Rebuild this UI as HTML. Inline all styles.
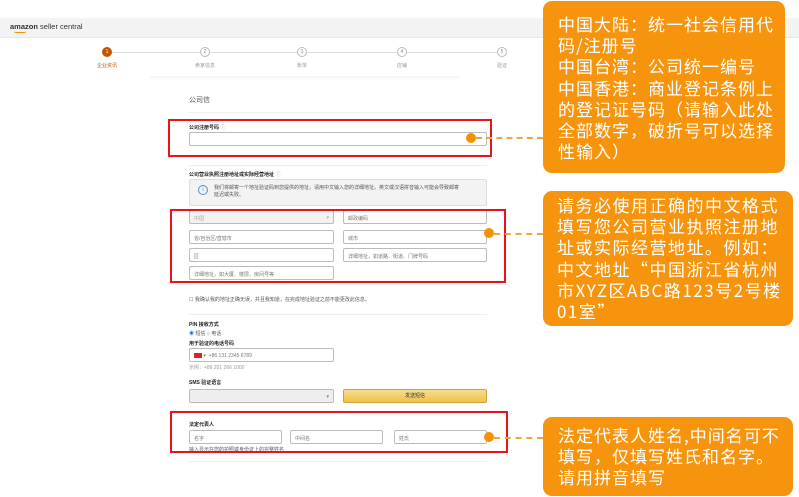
<!DOCTYPE html>
<html><head><meta charset="utf-8"><style>
*{margin:0;padding:0;box-sizing:border-box}
body{width:799px;height:497px;background:#fff;position:relative;overflow:hidden;font-family:"Liberation Sans","Noto Sans CJK SC",sans-serif;color:#333}
.a{position:absolute}
.t{font-size:5px;color:#555;white-space:nowrap}
.lb{font-size:5px;font-weight:bold;color:#222;white-space:nowrap}
.in{position:absolute;border:1px solid #bbb;border-radius:2px;background:#fff;height:14px;font-size:5px;color:#777;padding:4px 4px;white-space:nowrap}
.hr{position:absolute;left:189px;width:298px;height:1px;background:#eee}
.red{position:absolute;border:2px solid #e8141c}
.dot{position:absolute;width:10px;height:10px;border-radius:50%;background:#f39200}
.dash{position:absolute;height:0;border-top:2px dashed #f0a53a}
.box{position:absolute;background:#f7940d;border-radius:9px;color:#fff;font-family:"Noto Sans CJK SC",sans-serif;font-size:17px;line-height:21.2px;padding:0 0 0 15px;white-space:nowrap;letter-spacing:1px}
.st{position:absolute;width:10px;height:10px;border-radius:50%;border:1px solid #bbb;background:#fff;font-size:5px;text-align:center;line-height:8px;color:#888}
.sl{position:absolute;font-size:5px;color:#999;white-space:nowrap;transform:translateX(-50%)}
</style></head><body>
<div class="a" style="left:0;top:18px;width:799px;height:20px;background:#f3f3f3;border-bottom:1px solid #e6e6e6"></div>
<div class="a" style="left:10px;top:22px;font-size:7.5px;color:#333;white-space:nowrap"><b>amazon</b> seller central</div>
<div class="a" style="left:14px;top:31px;width:12px;height:2px;border-bottom:1px solid #f39200;border-radius:0 0 6px 6px"></div>
<div class="a" style="left:107px;top:52px;width:395px;height:1px;background:#ddd"></div>
<div class="st" style="left:102px;top:47px;background:#c45500;border-color:#c45500;color:#fff">1</div>
<div class="st" style="left:200px;top:47px">2</div>
<div class="st" style="left:297px;top:47px">3</div>
<div class="st" style="left:397px;top:47px">4</div>
<div class="st" style="left:497px;top:47px">5</div>
<div class="sl" style="left:107px;top:62px;color:#c45500">企业资讯</div>
<div class="sl" style="left:205px;top:62px">卖家信息</div>
<div class="sl" style="left:302px;top:62px">账单</div>
<div class="sl" style="left:402px;top:62px">店铺</div>
<div class="sl" style="left:502px;top:62px">验证</div>
<div class="a" style="left:150px;top:76px;width:310px;height:4px;background:linear-gradient(#f4f4f4,#fff)"></div>

<div class="a" style="left:189px;top:95px;font-size:7px;color:#555">公司信</div>
<div class="hr" style="top:112px"></div>
<div class="lb a" style="left:189px;top:124px">公司注册号码 <span style="color:#bbb">ⓘ</span></div>
<div class="in" style="left:189px;top:132px;width:298px"></div>
<div class="hr" style="top:165px"></div>
<div class="lb a" style="left:189px;top:171px">公司营业执照注册地址或实际经营地址 <span style="color:#bbb">ⓘ</span></div>
<div class="a" style="left:189px;top:179px;width:298px;height:27px;background:#f3f3f3;border:1px solid #ddd;border-radius:2px"></div>
<div class="a" style="left:198px;top:185px;width:10px;height:10px;border:1px solid #5a8ec8;border-radius:50%;font-size:6px;color:#5a8ec8;text-align:center;line-height:8px">i</div>
<div class="t a" style="left:214px;top:185px;line-height:7px">我们将邮寄一个地址验证码到您提供的地址，请用中文输入您的详细地址。英文或汉语拼音输入可能会导致邮寄<br>延迟或失败。</div>
<div class="in" style="left:189px;top:210px;width:145px;background:#f2f2f2;color:#aaa">中国<span style="float:right">▾</span></div>
<div class="in" style="left:343px;top:210px;width:144px">邮政编码</div>
<div class="in" style="left:189px;top:230px;width:145px">省/自治区/直辖市</div>
<div class="in" style="left:343px;top:230px;width:144px">城市</div>
<div class="in" style="left:189px;top:248px;width:145px">区</div>
<div class="in" style="left:343px;top:248px;width:144px">详细地址，如道路、街道、门牌号码</div>
<div class="in" style="left:189px;top:266px;width:145px">详细地址，如大厦、楼层、房间号等</div>
<div class="t a" style="left:189px;top:296px">☐ 我确认我的地址正确无误，并且我知道，在完成地址验证之前不能更改此信息。</div>
<div class="hr" style="top:314px"></div>
<div class="lb a" style="left:189px;top:321px">PIN 接收方式</div>
<div class="t a" style="left:189px;top:330px"><span style="color:#1a73e8">◉</span> 短信 ○ 电话</div>
<div class="lb a" style="left:189px;top:340px">用于验证的电话号码</div>
<div class="in" style="left:189px;top:348px;width:145px"><span style="display:inline-block;width:8px;height:5px;background:#d22;vertical-align:middle"></span> ▾ &nbsp;+86 131 2345 6789</div>
<div class="t a" style="left:189px;top:364px;color:#999">示例：+86 201 266 1000</div>
<div class="lb a" style="left:189px;top:379px">SMS 验证语言</div>
<div class="in" style="left:189px;top:389px;width:145px;background:#eee"><span style="float:right">▾</span></div>
<div class="a" style="left:343px;top:389px;width:144px;height:14px;background:linear-gradient(#f7dc8f,#f0c14b);border:1px solid #c9a640;border-radius:2px;font-size:5px;text-align:center;line-height:12px">发送短信</div>
<div class="lb a" style="left:189px;top:421px">法定代表人</div>
<div class="in" style="left:189px;top:430px;width:93px">名字</div>
<div class="in" style="left:290px;top:430px;width:93px">中间名</div>
<div class="in" style="left:394px;top:430px;width:93px">姓氏</div>
<div class="t a" style="left:189px;top:446px">输入显示在您的护照或身份证上的完整姓名</div>
<div class="hr" style="top:461px"></div>

<div class="red" style="left:168px;top:119px;width:324px;height:38px"></div>
<div class="red" style="left:170px;top:209px;width:336px;height:74px"></div>
<div class="red" style="left:170px;top:411px;width:338px;height:42px"></div>
<div class="dot" style="left:466px;top:133px"></div>
<div class="dot" style="left:484px;top:228px"></div>
<div class="dot" style="left:484px;top:432px"></div>
<div class="dash" style="left:476px;top:137px;width:67px"></div>
<div class="dash" style="left:494px;top:233px;width:49px"></div>
<div class="dash" style="left:494px;top:437px;width:49px"></div>

<div class="box" style="left:543px;top:1px;width:242px;height:172px;padding-top:12px">中国大陆：统一社会信用代<br>码/注册号<br>中国台湾：公司统一编号<br>中国香港：商业登记条例上<br>的登记证号码（请输入此处<br>全部数字，破折号可以选择<br>性输入）</div>
<div class="box" style="left:543px;top:191px;width:250px;height:135px;padding-top:3px;padding-left:14px;letter-spacing:1.5px">请务必使用正确的中文格式<br>填写您公司营业执照注册地<br>址或实际经营地址。例如：<br>中文地址“中国浙江省杭州<br>市XYZ区ABC路123号2号楼<br>01室”</div>
<div class="box" style="left:543px;top:417px;width:250px;height:79px;padding-top:7px">法定代表人姓名,中间名可不<br>填写，仅填写姓氏和名字。<br>请用拼音填写</div>
</body></html>
